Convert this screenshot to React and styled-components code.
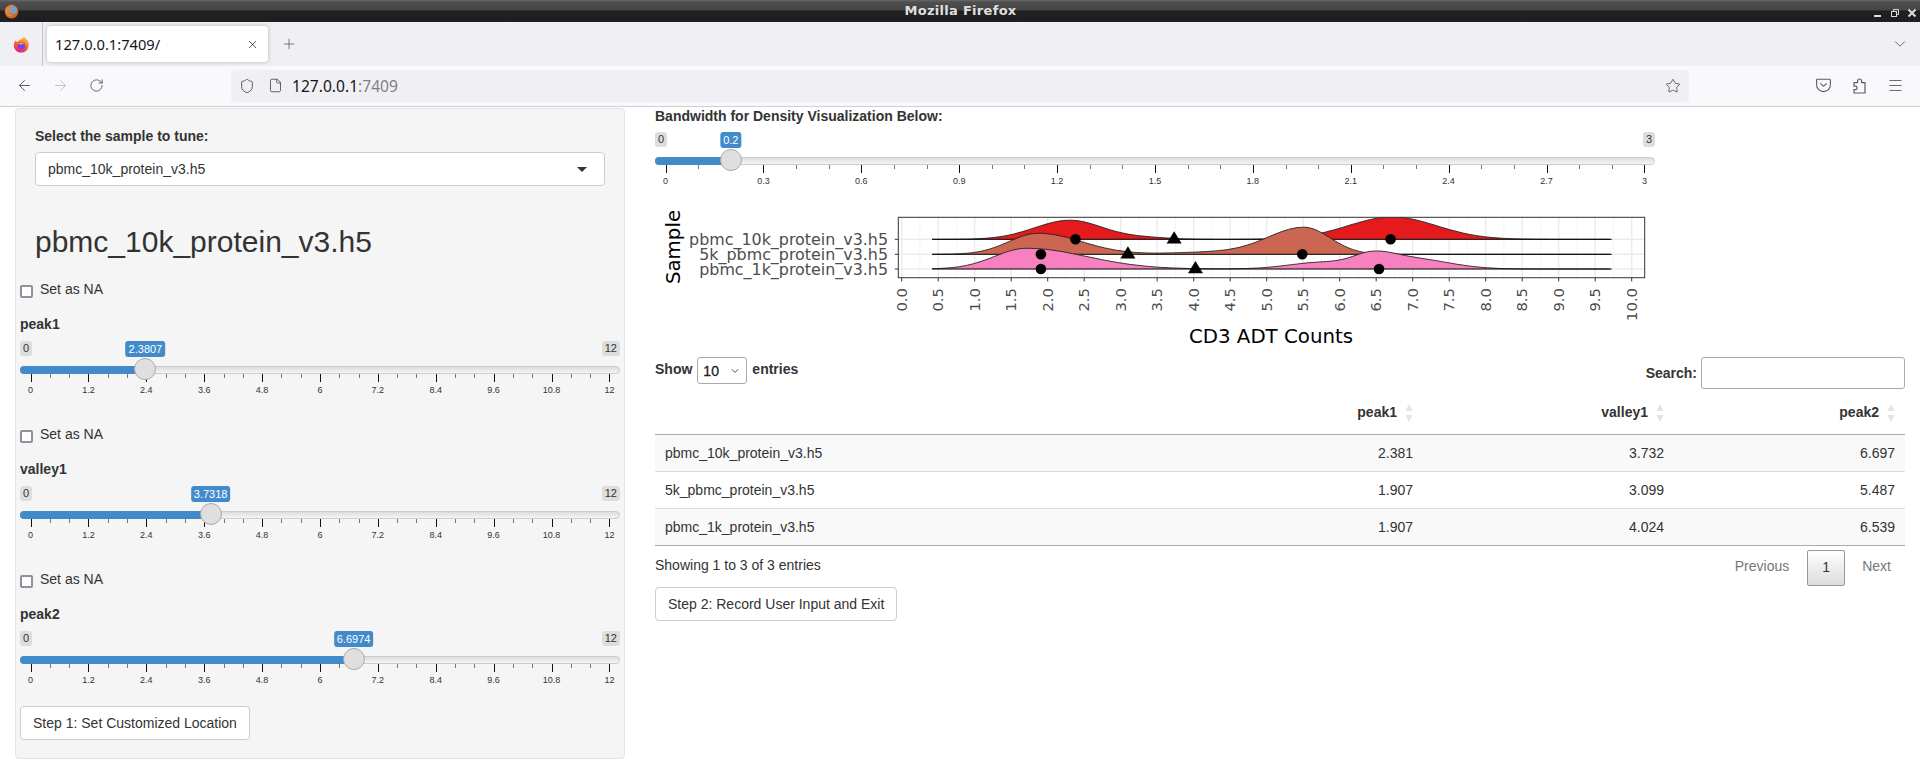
import React from "react"
import styled, { createGlobalStyle } from "styled-components"
import { ArrowLeft, ArrowRight, RotateCw, ChevronDown, Plus, X, Shield, File, Star, Menu } from "lucide-react"

const GlobalStyle = createGlobalStyle`
    html, body {
        margin: 0;
        padding: 0;
        height: 779px;
        overflow: hidden;
        background: #fff;
        color: #333;
        font-family: "Liberation Sans", Arial, sans-serif;
        font-size: 14px;
        line-height: 20px;
    }
    * {
        box-sizing: border-box;
    }
`

const TitleBar = styled.div`
    height: 22px;
    display: grid;
    grid-template-columns: 1fr auto 1fr;
    align-items: center;
    padding: 0 3px 0 4px;
    background: linear-gradient(#6a6a6a 0, #4f4f4f 2px, #454545 10px, #202020 11px, #1f1f1f 100%);
    color: #dfdfdf;
    font-family: "DejaVu Sans", sans-serif;
    font-size: 13px;
    font-weight: 700;
`

const WindowTitle = styled.span`
    letter-spacing: 0.3px;
`

const WindowButtons = styled.div`
    display: flex;
    align-items: center;
    justify-content: flex-end;
    gap: 7px;
    margin-top: 3px;
`

const TabStrip = styled.div`
    height: 44px;
    display: flex;
    align-items: center;
    background: #f0f0f4;
`

const ViewsButton = styled.div`
    width: 43px;
    height: 44px;
    display: flex;
    align-items: center;
    justify-content: center;
    border-right: 1px solid #c8c8cc;
`

const Tab = styled.div`
    width: 221px;
    height: 36px;
    margin-left: 4px;
    padding: 0 9px 0 8px;
    display: flex;
    align-items: center;
    justify-content: space-between;
    background: #fff;
    border-radius: 4px;
    box-shadow: 0 0 4px rgba(0, 0, 0, 0.25);
    color: #15141a;
    font-family: "Noto Sans", sans-serif;
    font-size: 14.7px;
`

const StripButton = styled.div`
    display: flex;
    margin-left: ${props => props.$left}px;
    color: #5b5b66;
`

const Toolbar = styled.div`
    height: 41px;
    padding-bottom: 1px;
    display: flex;
    align-items: center;
    background: #f9f9fb;
    border-bottom: 1px solid #cfcfd8;
    color: #5b5b66;
`

const ToolbarStart = styled.div`
    width: 6px;
`

const NavButton = styled.div`
    width: 36px;
    display: flex;
    justify-content: center;
    color: ${props => props.$off ? "#bcbcc2" : "#4f4f59"};
`

const UrlBar = styled.div`
    width: 1458px;
    height: 32px;
    margin-left: 117px;
    padding: 0 8px;
    display: flex;
    align-items: center;
    background: #f0f0f4;
    border-radius: 4px;
    color: #4f4f59;
`

const UrlSpacer = styled.span`
    width: 13px;
`

const UrlHost = styled.span`
    margin-left: 9px;
    color: #15141a;
    font-family: "Noto Sans", sans-serif;
    font-size: 15.6px;
    flex: 1;
`

const UrlPort = styled.span`
    color: #7f7f86;
`

const ToolIcons = styled.div`
    margin-left: 127px;
    width: 90px;
    display: flex;
    align-items: center;
    gap: 20px;
    color: #4f4f59;
`

const Page = styled.div`
    display: grid;
    grid-template-columns: 640px 1280px;
    height: 672px;
    overflow: hidden;
`

const SideColumn = styled.div`
    padding: 1px 15px 0;
`

const MainColumn = styled.div`
    padding: 0 15px;
    margin-top: -1px;
`

const Well = styled.div`
    height: 651px;
    padding: 17px 4px 0;
    background: #f5f5f5;
    border: 1px solid #e3e3e3;
    border-radius: 4px;
`

const SampleBlock = styled.div`
    padding: 0 15px;
`

const FieldLabel = styled.div`
    font-weight: 700;
    margin-bottom: ${props => props.$gap || 0}px;
`

const SelectBox = styled.div`
    height: 34px;
    padding: 0 12px;
    display: flex;
    align-items: center;
    justify-content: space-between;
    background: #fff;
    border: 1px solid #ccc;
    border-radius: 4px;
`

const Caret = styled.span`
    width: 0;
    height: 0;
    margin-right: 5px;
    border-left: 5px solid transparent;
    border-right: 5px solid transparent;
    border-top: 5px solid #333;
`

const SampleTitle = styled.h3`
    margin: 39px 0 21px;
    font-size: 30px;
    font-weight: 500;
    line-height: 33px;
`

const NaRow = styled.label`
    display: flex;
    height: 20px;
    margin-top: ${props => props.$top}px;
    margin-bottom: 15px;
`

const CheckBox = styled.span`
    width: 13px;
    height: 13px;
    margin: 6px 7px 0 0;
    background: #fff;
    border: 2px solid #8f8f9d;
    border-radius: 2px;
`

const SliderWrap = styled.div`
    position: relative;
    width: ${props => props.$width}px;
    height: 55px;
    margin-top: ${props => props.$top}px;
`

const EdgeLabel = styled.span`
    position: absolute;
    top: 0;
    ${props => props.$side}: 0;
    padding: 0 3px;
    height: 15px;
    background: #ddd;
    border-radius: 3px;
    font-size: 11px;
    line-height: 14px;
`

const ValueLabel = styled.span`
    position: absolute;
    top: 0;
    z-index: 2;
    height: 16px;
    padding: 0 3px;
    transform: translateX(-50%);
    background: #428bca;
    border-radius: 3px;
    color: #fff;
    font-size: 11px;
    line-height: 16px;
`

const Track = styled.div`
    position: absolute;
    top: 25px;
    left: 0;
    right: 0;
    height: 8px;
    background: linear-gradient(#dcdcdc, #f5f5f5);
    border: 1px solid #ccc;
    border-radius: 8px;
`

const TrackFill = styled.div`
    position: absolute;
    top: 25px;
    left: 0;
    height: 8px;
    background: #428bca;
    border-radius: 8px 0 0 8px;
`

const Handle = styled.div`
    position: absolute;
    top: 17px;
    z-index: 1;
    width: 22px;
    height: 22px;
    transform: translateX(-50%);
    background: #dfdfdf;
    border: 1px solid #aaa;
    border-radius: 50%;
`

const Tick = styled.span`
    position: absolute;
    top: 33px;
    width: 1px;
    height: ${props => props.$major ? 8 : 4}px;
    background: ${props => props.$major ? "#111" : "#777"};
`

const TickLabel = styled.span`
    position: absolute;
    top: 43px;
    transform: translateX(-50%);
    font-size: 9px;
    line-height: 12px;
`

const Button = styled.button`
    display: block;
    height: 34px;
    padding: 0 12px;
    background: #fff;
    border: 1px solid #ccc;
    border-radius: 4px;
    color: #333;
    font-family: inherit;
    font-size: 14px;
    margin-top: ${props => props.$top || 0}px;
`

const PlotArea = styled.svg`
    display: block;
    width: 1000px;
    height: 167px;
    margin-top: 3px;
`

const TableControls = styled.div`
    display: flex;
    justify-content: space-between;
    height: 32px;
    font-weight: 700;
`

const LengthControl = styled.div`
    display: flex;
    align-items: flex-start;
    height: 27px;
    gap: 5px;
    line-height: 24px;
`

const LengthSelect = styled.div`
    width: 50px;
    height: 27px;
    padding: 0 5px;
    display: flex;
    align-items: center;
    justify-content: space-between;
    border: 1px solid #aaa;
    border-radius: 3px;
    font-weight: 400;
    color: #222;
    -webkit-text-stroke: 0.3px #222;
`

const SearchControl = styled.div`
    display: flex;
    align-items: center;
    gap: 4px;
`

const SearchInput = styled.div`
    width: 204px;
    height: 32px;
    background: #fff;
    border: 1px solid #aaa;
    border-radius: 3px;
`

const DataTable = styled.table`
    width: 1250px;
    table-layout: fixed;
    border-collapse: separate;
    border-spacing: 0;
`

const HeadCell = styled.th`
    width: ${props => props.$width ? props.$width + "px" : "auto"};
    height: 46px;
    padding: 0 26px 0 10px;
    position: relative;
    border-bottom: 1px solid #aaa;
    font-weight: 700;
    text-align: right;
`

const SortIcon = styled.svg`
    position: absolute;
    right: 10px;
    top: 15px;
`

const Cell = styled.td`
    height: 37px;
    padding: 0 10px;
    background: ${props => props.$odd ? "#f9f9f9" : "#fff"};
    border-bottom: 1px solid ${props => props.$last ? "#aaa" : "#ddd"};
    text-align: ${props => props.$num ? "right" : "left"};
`

const TableFooter = styled.div`
    display: flex;
    justify-content: space-between;
    height: 41px;
    padding-top: 4px;
`

const InfoText = styled.div`
    padding-top: 5px;
`

const Pagination = styled.div`
    display: flex;
    align-items: flex-start;
    height: 36px;
    padding-right: 14px;
    color: #777;
    line-height: 32px;
`

const PageNumber = styled.div`
    width: 38px;
    height: 36px;
    margin: 0 17px 0 18px;
    text-align: center;
    background: linear-gradient(#fff, #dcdcdc);
    border: 1px solid #979797;
    border-radius: 2px;
    color: #333;
`

const samples = ["pbmc_10k_protein_v3.h5", "5k_pbmc_protein_v3.h5", "pbmc_1k_protein_v3.h5"]

const tableRows = [
    ["pbmc_10k_protein_v3.h5", "2.381", "3.732", "6.697"],
    ["5k_pbmc_protein_v3.h5", "1.907", "3.099", "5.487"],
    ["pbmc_1k_protein_v3.h5", "1.907", "4.024", "6.539"],
]

const leftLabels = ["0", "1.2", "2.4", "3.6", "4.8", "6", "7.2", "8.4", "9.6", "10.8", "12"]
const bandLabels = ["0", "0.3", "0.6", "0.9", "1.2", "1.5", "1.8", "2.1", "2.4", "2.7", "3"]

// x pixel of a slider value
const PAD = 10.6

const Slider = ({ width, max, value, text, labels, top }) => {
    const span = width - PAD * 2
    const at = v => PAD + (v / max) * span
    const ticks = []
    for (let i = 0; i <= 30; i++) {
        ticks.push(<Tick key={i} $major={i % 3 === 0} style={{ left: PAD + (i / 30) * span }} />)
    }
    return (
        <SliderWrap $width={width} $top={top}>
            <EdgeLabel $side="left">0</EdgeLabel>
            <EdgeLabel $side="right">{max}</EdgeLabel>
            <ValueLabel style={{ left: at(value) }}>{text}</ValueLabel>
            <Track />
            <TrackFill style={{ width: at(value) }} />
            <Handle style={{ left: at(value) }} />
            {ticks}
            {labels.map((label, i) => (
                <TickLabel key={label} style={{ left: PAD + (i / 10) * span }}>{label}</TickLabel>
            ))}
        </SliderWrap>
    )
}

const PeakSlider = ({ name, value, text, top }) => (
    <div>
        <NaRow $top={top}>
            <CheckBox />
            Set as NA
        </NaRow>
        <FieldLabel>{name}</FieldLabel>
        <Slider width={600} max={12} value={value} text={text} labels={leftLabels} top={7} />
    </div>
)

// plot scales, in page pixels
const xOf = v => 901.7 + 73 * v

const ridges = [
    {
        base: 239.3,
        fill: "#e41a1c",
        peaks: [
            { m: 2.3, h: 19, sl: 0.48, sr: 0.44 },
            { m: 3.3, h: 1.8, sl: 0.4, sr: 0.35 },
            { m: 6.72, h: 22.3, sl: 0.61, sr: 0.61 },
        ],
        circles: [2.381, 6.697],
        triangle: 3.732,
    },
    {
        base: 254.3,
        fill: "#ca6651",
        peaks: [
            { m: 1.87, h: 21, sl: 0.4, sr: 0.59 },
            { m: 4.2, h: 2, sl: 0.5, sr: 0.5 },
            { m: 5.51, h: 27, sl: 0.5, sr: 0.36 },
        ],
        circles: [1.907, 5.487],
        triangle: 3.099,
    },
    {
        base: 269,
        fill: "#f781bf",
        peaks: [
            { m: 1.71, h: 20.7, sl: 0.44, sr: 0.82 },
            { m: 5.75, h: 6.5, sl: 0.45, sr: 0.5 },
            { m: 6.45, h: 10, sl: 0.25, sr: 0.3 },
            { m: 7, h: 10, sl: 0.5, sr: 0.5 },
        ],
        circles: [1.907, 6.539],
        triangle: 4.024,
    },
]

const density = (peaks, v) => peaks.reduce((sum, p) => {
    const s = v < p.m ? p.sl : p.sr
    return sum + p.h * Math.exp(-((v - p.m) ** 2) / (2 * s * s))
}, 0)

const ridgeCurve = ({ base, peaks }) => {
    const points = []
    for (let v = 0.42; v <= 9.72; v += 0.04) {
        points.push(`${xOf(v).toFixed(1)},${(base - density(peaks, v)).toFixed(1)}`)
    }
    return points
}

const majorTicks = Array.from({ length: 21 }, (_, i) => i * 0.5)

const RidgePlot = () => (
    <PlotArea viewBox="655 190 1000 167">
        <defs>
            <clipPath id="panel">
                <rect x="898.3" y="217.3" width="746.4" height="60.4" />
            </clipPath>
        </defs>
        <g clipPath="url(#panel)">
            {majorTicks.map(v => (
                <g key={v}>
                    <line x1={xOf(v)} x2={xOf(v)} y1="217" y2="278" stroke="#ebebeb" strokeWidth="1.4" />
                    <line x1={xOf(v + 0.25)} x2={xOf(v + 0.25)} y1="217" y2="278" stroke="#f2f2f2" strokeWidth="0.8" />
                </g>
            ))}
            {ridges.map(r => (
                <line key={r.base} x1="898" x2="1645" y1={r.base} y2={r.base} stroke="#ebebeb" strokeWidth="1.4" />
            ))}
            {ridges.map(r => {
                const curve = ridgeCurve(r)
                return (
                    <g key={r.fill}>
                        <polygon points={`932,${r.base} ${curve.join(" ")} 1611.7,${r.base}`} fill={r.fill} />
                        <polyline points={curve.join(" ")} fill="none" stroke="#222" strokeWidth="0.9" />
                        <line x1="932" x2="1611.7" y1={r.base} y2={r.base} stroke="#000" strokeWidth="1" />
                    </g>
                )
            })}
            {ridges.map(r => (
                <g key={r.base}>
                    {r.circles.map(v => <circle key={v} cx={xOf(v)} cy={r.base} r="5.3" fill="#000" />)}
                    <polygon
                        points={`${xOf(r.triangle)},${r.base - 8} ${xOf(r.triangle) + 7.5},${r.base + 4.2} ${xOf(r.triangle) - 7.5},${r.base + 4.2}`}
                        fill="#000"
                    />
                </g>
            ))}
        </g>
        <rect x="898.3" y="217.3" width="746.4" height="60.4" fill="none" stroke="#333" strokeWidth="1" />
        {ridges.map((r, i) => (
            <g key={r.base}>
                <line x1="894.8" x2="898" y1={r.base} y2={r.base} stroke="#333" strokeWidth="1" />
                <text x="888" y={r.base + 5.4 + i * 0.4} textAnchor="end" fontFamily="DejaVu Sans" fontSize="15.9" fill="#4d4d4d">{samples[i]}</text>
            </g>
        ))}
        {majorTicks.map(v => (
            <g key={v}>
                <line x1={xOf(v)} x2={xOf(v)} y1="278" y2="281.4" stroke="#333" strokeWidth="1" />
                <text
                    transform={`translate(${xOf(v) + 5.2},288) rotate(-90)`}
                    textAnchor="end"
                    fontFamily="DejaVu Sans"
                    fontSize="14.8"
                    fill="#4d4d4d"
                >
                    {v.toFixed(1)}
                </text>
            </g>
        ))}
        <text transform="translate(680,247) rotate(-90)" textAnchor="middle" fontFamily="DejaVu Sans" fontSize="19.8" fill="#000">Sample</text>
        <text x="1271" y="343" textAnchor="middle" fontFamily="DejaVu Sans" fontSize="19.8" fill="#000">CD3 ADT Counts</text>
    </PlotArea>
)

const HeadSort = () => (
    <SortIcon width="8" height="18" viewBox="0 0 8 18">
        <path d="M4 0 L7.5 7 H0.5 Z" fill="#e4e4e4" />
        <path d="M4 18 L7.5 11 H0.5 Z" fill="#e4e4e4" />
    </SortIcon>
)

// the old logo the window manager shows in the title bar
const WindowLogo = () => (
    <svg width="15" height="15" viewBox="0 0 15 15">
        <circle cx="7.5" cy="7.8" r="6.8" fill="#d9621e" />
        <circle cx="8.7" cy="6" r="4.4" fill="#7f9cb8" />
        <path d="M1 6 C3 1 8 0 11 1.2 C8 1.2 5 3 4.6 6.5 C4.4 9 6 11.5 9 11.8 C6.5 13.5 1.5 12 1 6 Z" fill="#e8862a" />
    </svg>
)

const FirefoxLogo = () => (
    <svg width="17" height="17" viewBox="0 0 16 16">
        <defs>
            <linearGradient id="foxBody" x1="0.7" y1="0" x2="0.3" y2="1">
                <stop offset="0" stopColor="#ffbd2e" />
                <stop offset="0.5" stopColor="#ff6a2b" />
                <stop offset="1" stopColor="#e31587" />
            </linearGradient>
        </defs>
        <path d="M10.4 0.6 C11 2.2 13 2.8 14 4.6 C15.6 7.8 15 15.4 8 15.6 C3.4 15.6 0.6 12.2 0.8 8.2 C0.9 6.4 1.6 5 2.6 4 C3 5 3.4 5.4 4 5.8 C5 3.6 8.6 3.6 10.4 0.6 Z" fill="url(#foxBody)" />
        <circle cx="8" cy="9.2" r="3.6" fill="#7542e5" />
        <path d="M4.6 7.6 C6 5.8 9.6 5.6 11.2 8 C9.4 7.2 8.4 7.4 7.6 8.2 C6.6 8 5.6 7.8 4.6 7.6 Z" fill="#ff9a2e" />
    </svg>
)

const PocketIcon = () => (
    <svg width="15" height="15" viewBox="0 0 15 15" fill="none" stroke="#5b5b66" strokeWidth="1.1">
        <path d="M1.6 1.2 H13.4 A1 1 0 0 1 14.4 2.2 V6.8 A6.9 6.8 0 0 1 0.6 6.8 V2.2 A1 1 0 0 1 1.6 1.2 Z" />
        <path d="M4.6 5.6 L7.5 8.3 L10.4 5.6" strokeLinecap="round" />
    </svg>
)

const ExtensionIcon = () => (
    <svg width="16" height="16" viewBox="0 0 16 16" fill="none" stroke="#5b5b66" strokeWidth="1.2" strokeLinejoin="round">
        <path d="M3 4.6 H6.6 V3 A2 2 0 0 1 10.6 3 V4.6 H14 V15 H3 V11.6 H4.4 A1.7 1.7 0 0 0 4.4 8.2 H3 Z" />
    </svg>
)

export default function App() {
    return (
        <>
            <GlobalStyle />
            <TitleBar>
                <WindowLogo />
                <WindowTitle>Mozilla Firefox</WindowTitle>
                <WindowButtons>
                    <svg width="10" height="10" viewBox="0 0 10 10"><rect x="1" y="7" width="7" height="2" fill="#ddd" /></svg>
                    <svg width="10" height="10" viewBox="0 0 10 10" fill="none" stroke="#ddd"><rect x="1.5" y="3.5" width="5" height="5" /><path d="M3.5 3.5 V1.5 H8.5 V6.5 H6.5" /></svg>
                    <svg width="10" height="10" viewBox="0 0 10 10" fill="none" stroke="#ddd" strokeWidth="2"><path d="M1.5 1.5 L8.5 8.5 M8.5 1.5 L1.5 8.5" /></svg>
                </WindowButtons>
            </TitleBar>
            <TabStrip>
                <ViewsButton><FirefoxLogo /></ViewsButton>
                <Tab>
                    127.0.0.1:7409/
                    <X size={13} strokeWidth={1.3} />
                </Tab>
                <StripButton $left={13}><Plus size={16} strokeWidth={1.2} /></StripButton>
                <StripButton $left={1594}><ChevronDown size={18} strokeWidth={1.2} /></StripButton>
            </TabStrip>
            <Toolbar>
                <ToolbarStart />
                <NavButton><ArrowLeft size={17} strokeWidth={1.3} /></NavButton>
                <NavButton $off><ArrowRight size={17} strokeWidth={1.3} /></NavButton>
                <NavButton><RotateCw size={15} strokeWidth={1.4} /></NavButton>
                <UrlBar>
                    <Shield size={16} strokeWidth={1.4} />
                    <UrlSpacer />
                    <File size={15} strokeWidth={1.4} />
                    <UrlHost>127.0.0.1<UrlPort>:7409</UrlPort></UrlHost>
                    <Star size={16} strokeWidth={1.3} />
                </UrlBar>
                <ToolIcons>
                    <PocketIcon />
                    <ExtensionIcon />
                    <Menu size={17} strokeWidth={1.2} />
                </ToolIcons>
            </Toolbar>
            <Page>
                <SideColumn>
                    <Well>
                        <SampleBlock>
                            <FieldLabel $gap={6}>Select the sample to tune:</FieldLabel>
                            <SelectBox>
                                pbmc_10k_protein_v3.h5
                                <Caret />
                            </SelectBox>
                            <SampleTitle>pbmc_10k_protein_v3.h5</SampleTitle>
                        </SampleBlock>
                        <PeakSlider name="peak1" value={2.3807} text="2.3807" top={0} />
                        <PeakSlider name="valley1" value={3.7318} text="3.7318" top={28} />
                        <PeakSlider name="peak2" value={6.6974} text="6.6974" top={28} />
                        <Button $top={20}>Step 1: Set Customized Location</Button>
                    </Well>
                </SideColumn>
                <MainColumn>
                    <FieldLabel>Bandwidth for Density Visualization Below:</FieldLabel>
                    <Slider width={1000} max={3} value={0.2} text="0.2" labels={bandLabels} top={6} />
                    <RidgePlot />
                    <TableControls>
                        <LengthControl>
                            Show
                            <LengthSelect>
                                10
                                <ChevronDown size={12} strokeWidth={1.6} />
                            </LengthSelect>
                            entries
                        </LengthControl>
                        <SearchControl>
                            Search:
                            <SearchInput />
                        </SearchControl>
                    </TableControls>
                    <DataTable>
                        <thead>
                            <tr>
                                <HeadCell />
                                <HeadCell $width={251}>peak1<HeadSort /></HeadCell>
                                <HeadCell $width={251}>valley1<HeadSort /></HeadCell>
                                <HeadCell $width={231}>peak2<HeadSort /></HeadCell>
                            </tr>
                        </thead>
                        <tbody>
                            {tableRows.map((row, i) => (
                                <tr key={row[0]}>
                                    {row.map((value, j) => (
                                        <Cell key={j} $odd={i % 2 === 0} $last={i === 2} $num={j > 0}>{value}</Cell>
                                    ))}
                                </tr>
                            ))}
                        </tbody>
                    </DataTable>
                    <TableFooter>
                        <InfoText>Showing 1 to 3 of 3 entries</InfoText>
                        <Pagination>
                            Previous
                            <PageNumber>1</PageNumber>
                            Next
                        </Pagination>
                    </TableFooter>
                    <Button>Step 2: Record User Input and Exit</Button>
                </MainColumn>
            </Page>
        </>
    )
}
